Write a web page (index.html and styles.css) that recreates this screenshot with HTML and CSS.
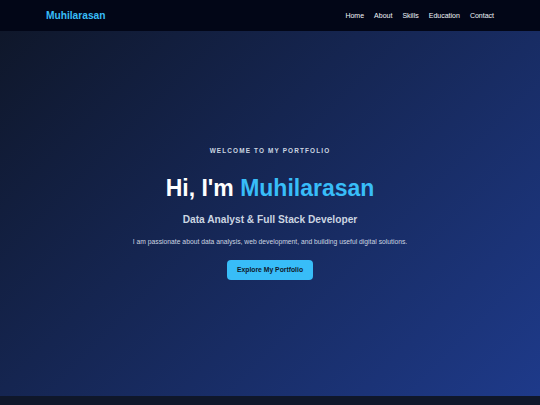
FILE: index.html
```html
<!DOCTYPE html>
<html>
<head>
<meta charset="utf-8">
<link rel="stylesheet" href="styles.css">
</head>
<body>
<header class="navbar">
  <div class="logo">Muhilarasan</div>
  <nav class="links">
    <a href="#">Home</a>
    <a href="#">About</a>
    <a href="#">Skills</a>
    <a href="#">Education</a>
    <a href="#">Contact</a>
  </nav>
</header>
<section class="hero">
  <p class="eyebrow">WELCOME TO MY PORTFOLIO</p>
  <h1 class="title">Hi, I'm <span class="accent">Muhilarasan</span></h1>
  <h2 class="subtitle">Data Analyst &amp; Full Stack Developer</h2>
  <p class="desc">I am passionate about data analysis, web development, and building useful digital solutions.</p>
  <a class="btn" href="#">Explore My Portfolio</a>
</section>
<div class="after"></div>
</body>
</html>
```
FILE: styles.css
```css
* { box-sizing: border-box; }
html, body { margin: 0; padding: 0; }
body {
  font-family: "Liberation Sans", Arial, sans-serif;
  background: #0f172a;
  color: #fff;
  width: 540px;
  height: 405px;
  overflow: hidden;
}
.navbar {
  height: 31px;
  background: #020617;
  display: flex;
  align-items: center;
  justify-content: space-between;
  padding: 0 46px;
}
.logo {
  color: #38bdf8;
  font-weight: bold;
  font-size: 10.2px;
}
.links {
  display: flex;
  gap: 10px;
}
.links a {
  color: #f1f5f9;
  text-decoration: none;
  font-size: 7px;
}
.hero {
  height: 365px;
  background: linear-gradient(135deg, #0f172a 0%, #1e3a8a 100%);
  display: flex;
  flex-direction: column;
  align-items: center;
  justify-content: center;
  text-align: center;
}
.eyebrow {
  margin: 0;
  font-size: 6.4px;
  font-weight: bold;
  letter-spacing: 1.15px;
  color: #cbd5e1;
}
.title {
  margin: 21px 0 0;
  font-size: 23px;
  font-weight: bold;
  color: #fff;
  line-height: 1.2;
}
.accent { color: #38bdf8; }
.subtitle {
  margin: 11px 0 0;
  font-size: 10.2px;
  font-weight: bold;
  color: #cbd5e1;
}
.desc {
  margin: 13px 0 0;
  font-size: 6.75px;
  color: #cbd5e1;
}
.btn {
  margin-top: 15px;
  width: 86px;
  height: 20px;
  display: flex;
  align-items: center;
  justify-content: center;
  background: #38bdf8;
  color: #0f172a;
  font-size: 6.8px;
  font-weight: bold;
  text-decoration: none;
  border-radius: 4px;
}
.after {
  height: 9px;
  background: #0f172a;
}
```
